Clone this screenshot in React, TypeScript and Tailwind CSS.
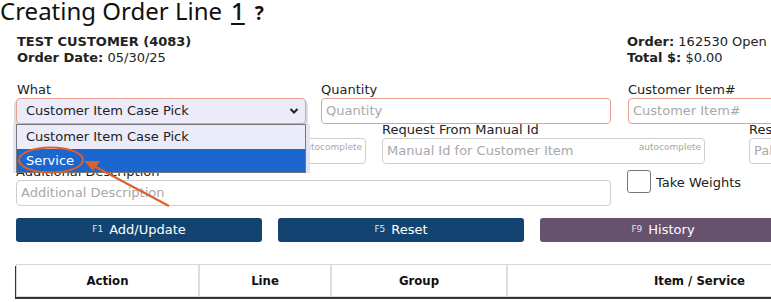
import React from 'react';

const body = { fontFamily: '"DejaVu Sans", Verdana, sans-serif' };

function Field({
  label,
  placeholder,
  className,
  hot,
  auto,
}: {
  label?: string;
  placeholder: string;
  className?: string;
  hot?: boolean;
  auto?: boolean;
}) {
  return (
    <div className={className}>
      {label && <div className="h-[14px] leading-[14px] text-[13px] text-[#222]">{label}</div>}
      <div
        className={`mt-[1px] flex h-[26px] items-center rounded-[4px] border bg-white pl-[4px] pr-[3px] ${
          hot ? 'border-[#e8a08e]' : 'border-[#cfcfcf]'
        }`}
      >
        <span className="flex-1 truncate text-[13px] text-[#a8a8a8]">{placeholder}</span>
        {auto && <span className="-mt-[6px] text-[9px] text-[#a8a8a8]">autocomplete</span>}
      </div>
    </div>
  );
}

function ActionButton({ fkey, label, purple }: { fkey: string; label: string; purple?: boolean }) {
  return (
    <button
      className={`flex h-[24px] w-[246px] shrink-0 items-center justify-center gap-[6px] rounded-[3px] text-white ${
        purple ? 'bg-[#66526e]' : 'bg-[#134370]'
      }`}
    >
      <span className="text-[9px] text-[#dfe6ee]">{fkey}</span>
      <span className="text-[13px]">{label}</span>
    </button>
  );
}

export default function App() {
  return (
    <div className="relative h-[302px] w-[771px] overflow-hidden bg-white text-[#222]" style={body}>
      <div className="w-[1100px]">
        <h1
          className="-mt-[4px] flex items-baseline text-[24px] leading-[30px] text-[#111]"
          style={{ fontFamily: '"Noto Sans", sans-serif' }}
        >
          Creating Order Line
          <span className="ml-[9px] font-medium underline decoration-2 underline-offset-[3px]">1</span>
          <span className="ml-[10px] text-[19px] font-bold">?</span>
        </h1>

        <div className="mt-[6px] flex pl-[17px] text-[13px] leading-[16px]">
          <div className="w-[610px]">
            <div className="font-bold">TEST CUSTOMER (4083)</div>
            <div>
              <span className="font-bold">Order Date:</span> 05/30/25
            </div>
          </div>
          <div>
            <div>
              <span className="font-bold">Order:</span> 162530 Open
            </div>
            <div>
              <span className="font-bold">Total $:</span> $0.00
            </div>
          </div>
        </div>

        <div className="mt-[17px] flex gap-x-[15px] pl-[16px]">
          <div className="w-[290px]">
            <div className="h-[14px] pl-[1px] leading-[14px] text-[13px]">What</div>
            <div className="mt-[1px] flex h-[26px] items-center rounded-[4px] border border-[#e8a08e] bg-[#ebebf9] pl-[9px] pr-[6px] shadow-[0_3px_0_2px_#dcdce6]">
              <span className="flex-1 text-[13px]">Customer Item Case Pick</span>
              <svg width="10" height="8" viewBox="0 0 10 8">
                <path d="M1.5 2 L5 5.5 L8.5 2" fill="none" stroke="#222" strokeWidth="2" />
              </svg>
            </div>
          </div>
          <Field className="w-[290px]" label="Quantity" placeholder="Quantity" hot />
          <Field className="w-[290px] pl-[2px]" label="Customer Item#" placeholder="Customer Item#" hot />
        </div>

        <div className="-mt-[1px] flex pl-[16px]">
          <Field className="w-[350px]" label=" " placeholder="Item" auto />
          <Field className="ml-[16px] w-[323px]" label="Request From Manual Id" placeholder="Manual Id for Customer Item" auto />
          <Field className="ml-[44px] w-[200px]" label="Reserve" placeholder="Pallet" />
        </div>

        <div className="mt-[1px] flex items-start pl-[16px]">
          <Field className="w-[595px]" label="Additional Description" placeholder="Additional Description" />
          <div className="ml-[16px] mt-[5px] flex items-center">
            <div className="h-[23px] w-[24px] rounded-[3px] border border-[#777] bg-white" />
            <span className="ml-[5px] mt-[2px] text-[13px]">Take Weights</span>
          </div>
        </div>

        <div className="mt-[12px] flex gap-[16px] pl-[16px]">
          <ActionButton fkey="F1" label="Add/Update" />
          <ActionButton fkey="F5" label="Reset" />
          <ActionButton fkey="F9" label="History" purple />
        </div>

        <div className="ml-[16px] mt-[22px] w-[900px] shadow-[-1px_2px_0_#333]">
          <div
            className="flex h-[33px] items-center border border-[#d6d6de] text-[13px] font-bold text-[#111]"
            style={{ fontFamily: '"DejaVu Sans Condensed", "DejaVu Sans", sans-serif' }}
          >
            <div className="flex h-full w-[183px] items-center justify-center border-r-2 border-[#dcdce4]">Action</div>
            <div className="flex h-full w-[132px] items-center justify-center border-r-2 border-[#dcdce4]">Line</div>
            <div className="flex h-full w-[176px] items-center justify-center border-r-2 border-[#dcdce4]">Group</div>
            <div className="flex h-full w-[383px] items-center justify-center">Item / Service</div>
          </div>
        </div>
      </div>

      {/* open select list */}
      <div className="absolute left-[16px] top-[124px] w-[290px] border border-[#777] text-[13px] shadow-[4px_0_0_0_#e4e4f2,-3px_0_0_0_#e4e4f2]">
        <div className="flex h-[24px] items-center bg-[#ebebf9] pl-[9px]">Customer Item Case Pick</div>
        <div className="flex h-[23px] items-center bg-[#1b67cf] pl-[9px] text-white">Service</div>
      </div>

      {/* annotation */}
      <svg className="absolute left-0 top-0" width="771" height="302" viewBox="0 0 771 302">
        <ellipse cx="51" cy="160" rx="32" ry="12.5" fill="none" stroke="#dd5f2a" strokeWidth="2" />
        <line x1="169" y1="206" x2="92" y2="165" stroke="#dd5f2a" strokeWidth="2" />
        <path d="M84 161 L100 161 L93 171 Z" fill="#dd5f2a" />
      </svg>
    </div>
  );
}
